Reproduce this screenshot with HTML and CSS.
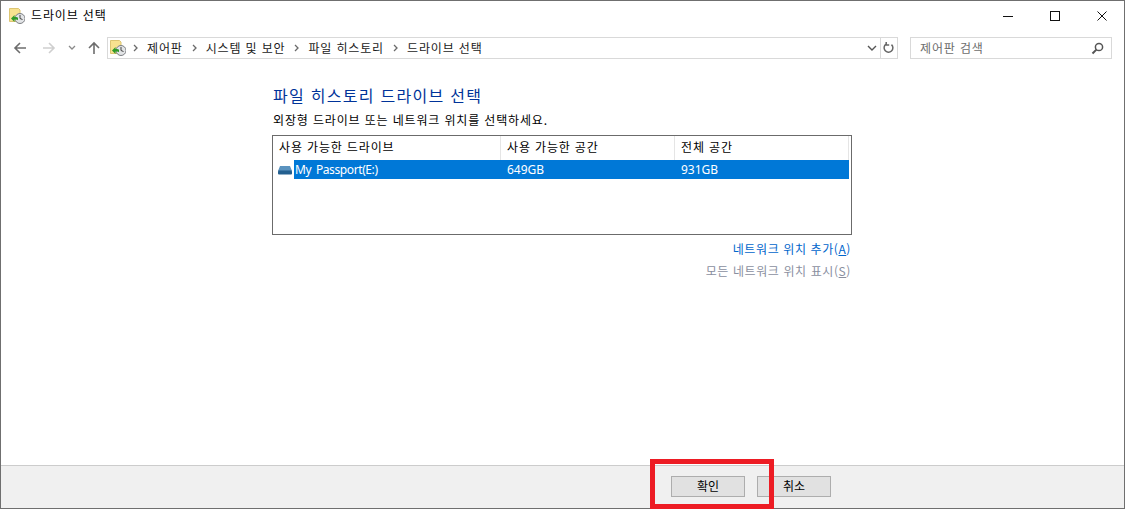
FILE: index.html
```html
<!DOCTYPE html>
<html lang="ko">
<head>
<meta charset="utf-8">
<title>드라이브 선택</title>
<link rel="stylesheet" href="styles.css">
</head>
<body>
<div class="window">
  <header class="titlebar">
    <svg class="app-icon" width="16" height="16" viewBox="0 0 16 16"><path d="M.5.5h9l1.500 1.500v11.500h-10.500z" fill="#f8e28f" stroke="#dcc572"/><circle cx="11" cy="10.500" r="5" fill="#e2e4e6" stroke="#7c7f83"/><path d="M11 7v3.500l2.500 1" fill="none" stroke="#444"/><path d="M2 10.500l3.500-3.500v2h1.500a3 3 0 0 1 2 .8v2.500a3 3 0 0 0-2-.8h-1.500v2.500z" fill="#2f9a2a"/></svg>
    <span class="title-text">드라이브 선택</span>
    <div class="winctl">
      <svg width="12" height="12" viewBox="0 0 12 12"><path d="M1 6.500h10" stroke="#111"/></svg>
      <svg width="12" height="12" viewBox="0 0 12 12"><rect x="1.500" y="1.500" width="9" height="9" fill="none" stroke="#111"/></svg>
      <svg width="12" height="12" viewBox="0 0 12 12"><path d="M1.500 1.500l9 9M10.500 1.500l-9 9" stroke="#111"/></svg>
    </div>
  </header>
  <nav class="navbar">
    <div class="nav-btns">
      <svg width="14" height="14" viewBox="0 0 14 14"><path d="M13 7H2M7 2L2 7l5 5" fill="none" stroke="#6d6d6d" stroke-width="1.6"/></svg>
      <svg width="14" height="14" viewBox="0 0 14 14"><path d="M1 7h11M7 2l5 5-5 5" fill="none" stroke="#cfcfcf" stroke-width="1.6"/></svg>
      <svg class="nav-chev" width="8" height="6" viewBox="0 0 8 6"><path d="M1 1l3 3 3-3" fill="none" stroke="#8a8a8a" stroke-width="1.300"/></svg>
      <svg width="14" height="14" viewBox="0 0 14 14"><path d="M7 13V2M2 7l5-5 5 5" fill="none" stroke="#6d6d6d" stroke-width="1.6"/></svg>
    </div>
    <div class="address">
      <svg class="addr-icon" width="16" height="16" viewBox="0 0 16 16"><path d="M.5.5h9l1.500 1.500v11.500h-10.500z" fill="#f8e28f" stroke="#dcc572"/><circle cx="11" cy="10.500" r="5" fill="#e2e4e6" stroke="#7c7f83"/><path d="M11 7v3.500l2.500 1" fill="none" stroke="#444"/><path d="M2 10.500l3.500-3.500v2h1.500a3 3 0 0 1 2 .8v2.500a3 3 0 0 0-2-.8h-1.500v2.500z" fill="#2f9a2a"/></svg>
      <svg class="sep" width="5" height="8" viewBox="0 0 5 8"><path d="M1 1l3 3-3 3" fill="none" stroke="#6a6a6a" stroke-width="1.300"/></svg><span>제어판</span>
      <svg class="sep" width="5" height="8" viewBox="0 0 5 8"><path d="M1 1l3 3-3 3" fill="none" stroke="#6a6a6a" stroke-width="1.300"/></svg><span>시스템 및 보안</span>
      <svg class="sep" width="5" height="8" viewBox="0 0 5 8"><path d="M1 1l3 3-3 3" fill="none" stroke="#6a6a6a" stroke-width="1.300"/></svg><span>파일 히스토리</span>
      <svg class="sep" width="5" height="8" viewBox="0 0 5 8"><path d="M1 1l3 3-3 3" fill="none" stroke="#6a6a6a" stroke-width="1.300"/></svg><span>드라이브 선택</span>
      <svg class="addr-chev" width="10" height="7" viewBox="0 0 10 7"><path d="M1 1l4 4 4-4" fill="none" stroke="#555" stroke-width="1.400"/></svg>
    </div>
    <div class="refresh">
      <svg width="12" height="14" viewBox="0 0 12 14"><path d="M3 3.200A4.400 4.400 0 1 0 8.500 3.600M3.200 1v3h3" fill="none" stroke="#666" stroke-width="1.500"/></svg>
    </div>
    <div class="search">
      <span>제어판 검색</span>
      <svg width="13" height="13" viewBox="0 0 13 13"><circle cx="8" cy="5" r="3.600" fill="none" stroke="#555" stroke-width="1.500"/><path d="M5.400 7.600L1.500 11.500" stroke="#555" stroke-width="2"/></svg>
    </div>
  </nav>
  <main class="content">
    <h1 class="heading">파일 히스토리 드라이브 선택</h1>
    <p class="sub">외장형 드라이브 또는 네트워크 위치를 선택하세요.</p>
    <div class="list">
      <div class="list-head">
        <div class="col-a">사용 가능한 드라이브</div>
        <div class="col-b">사용 가능한 공간</div>
        <div class="col-c">전체 공간</div>
      </div>
      <div class="list-row">
        <div class="col-a row-name">
          <svg width="16" height="10" viewBox="0 0 16 10"><path d="M3 1h10l2 5H1z" fill="#5b93bf"/><rect x="1" y="5.500" width="14" height="4" rx="1" fill="#235f8f"/></svg>
          <span class="row-label">My Passport(E:)</span>
        </div>
        <div class="col-b sel">649GB</div>
        <div class="col-c sel">931GB</div>
      </div>
    </div>
    <div class="links">
      <a class="link">네트워크 위치 추가(<u>A</u>)</a>
      <a class="link muted">모든 네트워크 위치 표시(<u>S</u>)</a>
    </div>
  </main>
  <footer class="footer">
    <button class="btn">확인</button>
    <button class="btn">취소</button>
  </footer>
  <div class="highlight"></div>
</div>
</body>
</html>
```
FILE: styles.css
```css
* { box-sizing: border-box; }
html, body { margin: 0; height: 100%; overflow: hidden; background: #fff; }
body { font-family: "Noto Sans CJK KR", "Noto Sans", sans-serif; font-size: 12px; letter-spacing: 0.85px; color: #000; }
.window { position: relative; width: 1125px; height: 509px; border: 1px solid #6f6f6f; display: flex; flex-direction: column; background: #fff; }
.titlebar { height: 30px; display: flex; align-items: center; padding-left: 8px; flex: none; }
.app-icon { margin-right: 6px; }
.title-text { font-size: 12px; line-height: 16px; padding-bottom: 2px; }
.winctl { margin-left: auto; display: flex; gap: 35px; padding-right: 16px; }
.navbar { height: 22px; margin-top: 6px; display: flex; align-items: stretch; flex: none; }
.nav-btns { width: 106px; display: flex; align-items: center; padding-left: 12px; gap: 15px; }
.nav-chev { margin: 0 -4px 0 -3px; }
.address { width: 774px; border: 1px solid #d9d9d9; display: flex; align-items: center; padding: 0 0 2px 2px; gap: 9px; color: #1a1a1a; }
.addr-icon { margin-right: -2px; margin-top: 2px; }
.sep { margin-top: 2px; }
.addr-chev { margin-left: auto; margin-right: 3px; margin-top: 2px; }
.refresh { width: 17px; border: 1px solid #d9d9d9; border-left: 0; display: flex; align-items: center; justify-content: center; }
.search { width: 202px; margin-left: 12px; border: 1px solid #d9d9d9; display: flex; align-items: center; justify-content: space-between; padding: 0 7px 2px 9px; color: #6d6d6d; }
.search svg { margin-top: 2px; }
.content { flex: 1; padding: 22px 0 0 271px; width: 851px; }
.heading { margin: 0; font-size: 16px; letter-spacing: 1.27px; font-weight: 400; line-height: 28px; color: #003399; padding-left: 1px; }
.sub { margin: 2px 0 0 1px; line-height: 18px; height: 18px; }
.list { margin-top: 6px; width: 580px; height: 100px; border: 1px solid #6b6b6b; }
.list-head { display: flex; height: 24px; align-items: center; }
.list-head .col-a, .list-head .col-b, .list-head .col-c { height: 24px; line-height: 22px; border-right: 1px solid #e5e5e5; }
.col-a { width: 228px; padding-left: 6px; }
.col-b { width: 174px; padding-left: 6px; }
.col-c { width: 174px; padding-left: 6px; }
.list-row { display: flex; height: 19px; line-height: 19px; color: #fff; }
.row-name { display: flex; align-items: center; padding-left: 4px; gap: 1px; padding-right: 0; }
.row-label { flex: 1; background: #0078d7; height: 19px; padding-left: 1px; font-family: "Noto Sans", sans-serif; letter-spacing: -0.4px; word-spacing: 2px; }
.sel { background: #0078d7; font-family: "Noto Sans", sans-serif; letter-spacing: 0; }
.links { width: 580px; display: flex; flex-direction: column; align-items: flex-end; margin-top: 5px; padding-right: 1px; letter-spacing: 0.6px; }
.link { height: 22px; line-height: 18px; color: #0066cc; }
.muted { color: #8a8fa0; }
.footer { height: 43px; flex: none; background: #f0f0f0; border-top: 1px solid #ccc; display: flex; align-items: center; gap: 12px; padding: 0 0 1px 670px; }
.btn { width: 74px; height: 21px; background: #e1e1e1; border: 1px solid #adadad; font: inherit; letter-spacing: 0; padding: 0 0 2px; line-height: 17px; color: #000; }
.highlight { position: absolute; left: 649px; top: 458px; width: 124px; height: 50px; border: 5px solid #ed1c24; pointer-events: none; }
```
